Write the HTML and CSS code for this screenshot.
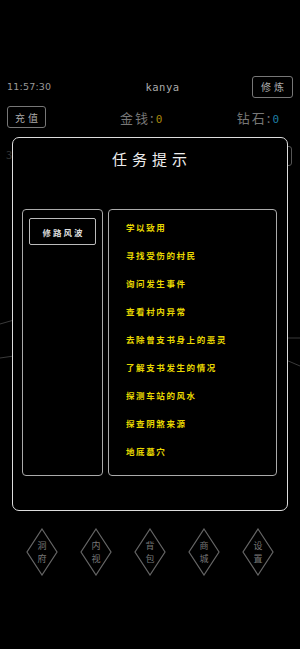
FILE: index.html
```html
<!DOCTYPE html>
<html lang="zh">
<head>
<meta charset="utf-8">
<link rel="stylesheet" href="styles.css">
</head>
<body>
<div class="page">
  <div class="header">
    <div class="row row1">
      <span class="time">11:57:30</span>
      <span class="name">kanya</span>
      <span class="btn">修炼</span>
    </div>
    <div class="row row2">
      <span class="btn">充值</span>
      <span class="stat">金钱:<b class="gold">0</b></span>
      <span class="stat">钻石:<b class="blue">0</b></span>
    </div>
  </div>
  <div class="stage">
    <svg class="bglines" width="300" height="390" viewBox="0 0 300 390">
      <path d="M0 196 L14 192" />
      <path d="M0 230 L14 228" />
      <path d="M286 210 L300 210" />
      <path d="M286 232 L300 238" />
    </svg>
    <span class="hidden-l">3</span>
    <span class="hidden-r"></span>
  </div>
  <nav class="nav">
    <div class="dia"><svg viewBox="0 0 32 48"><polygon points="16,1 31,24 16,47 1,24"/></svg><span class="lbl"><i>洞</i><i>府</i></span></div>
    <div class="dia"><svg viewBox="0 0 32 48"><polygon points="16,1 31,24 16,47 1,24"/></svg><span class="lbl"><i>内</i><i>视</i></span></div>
    <div class="dia"><svg viewBox="0 0 32 48"><polygon points="16,1 31,24 16,47 1,24"/></svg><span class="lbl"><i>背</i><i>包</i></span></div>
    <div class="dia"><svg viewBox="0 0 32 48"><polygon points="16,1 31,24 16,47 1,24"/></svg><span class="lbl"><i>商</i><i>城</i></span></div>
    <div class="dia"><svg viewBox="0 0 32 48"><polygon points="16,1 31,24 16,47 1,24"/></svg><span class="lbl"><i>设</i><i>置</i></span></div>
  </nav>
</div>

<div class="modal">
  <h1 class="title">任务提示</h1>
  <div class="panels">
    <div class="left">
      <div class="task-btn">修路风波</div>
    </div>
    <ul class="right">
      <li>学以致用</li>
      <li>寻找受伤的村民</li>
      <li>询问发生事件</li>
      <li>查看村内异常</li>
      <li>去除曾支书身上的恶灵</li>
      <li>了解支书发生的情况</li>
      <li>探测车站的风水</li>
      <li>探查阴煞来源</li>
      <li>地底墓穴</li>
    </ul>
  </div>
</div>
</body>
</html>
```

FILE: styles.css
```css
* { box-sizing: border-box; }
html, body {
  margin: 0;
  padding: 0;
  background: #000;
}
body {
  width: 300px;
  height: 649px;
  overflow: hidden;
  font-family: "Noto Sans CJK SC", "DejaVu Sans", sans-serif;
  color: #aaa;
}
.page {
  display: flex;
  flex-direction: column;
  height: 649px;
  padding-top: 75px;
}
.header {
  padding: 0 7px;
}
.row {
  display: flex;
  align-items: center;
  justify-content: space-between;
}
.row1 { height: 23px; }
.row2 { height: 22px; margin-top: 8px; }
.time {
  font-family: "DejaVu Sans", sans-serif;
  font-size: 9.5px;
  color: #999;
  width: 60px;
  letter-spacing: 0.2px;
}
.name {
  font-family: "DejaVu Sans Mono", monospace;
  font-size: 10.5px;
  color: #aaa;
  margin-left: 6px;
  letter-spacing: 0.5px;
}
.btn {
  display: flex;
  align-items: center;
  justify-content: center;
  border: 1px solid #777;
  border-radius: 3px;
  height: 22px;
  padding: 0;
  font-size: 10px;
  letter-spacing: 3px;
  color: #aaa;
  text-indent: 3px;
  width: 41px;
  white-space: nowrap;
}
.row2 .btn { width: 39px; height: 22px; }
.stat {
  font-size: 13px;
  color: #777;
  letter-spacing: 2px;
  white-space: nowrap;
}
.row2 .stat:nth-child(2) { margin-left: 74px; margin-right: auto; }
.row2 .stat:nth-child(3) { margin-right: 14px; }
.stat b { font-weight: normal; font-family: "DejaVu Sans Mono", monospace; font-size: 11px; letter-spacing: 0; }
.gold { color: #a8860b; }
.blue { color: #1f7ea6; }

.stage {
  position: relative;
  flex: 1;
}
.bglines {
  position: absolute;
  left: 0;
  top: 0;
}
.bglines path {
  stroke: #3a3a3a;
  stroke-width: 1;
  fill: none;
}
.hidden-l {
  position: absolute;
  left: 6px;
  top: 18px;
  font-size: 11px;
  color: #333;
}
.hidden-r {
  position: absolute;
  left: 270px;
  top: 18px;
  width: 22px;
  height: 20px;
  border: 1px solid #555;
  border-radius: 3px;
}

.nav {
  display: flex;
  justify-content: center;
  gap: 22px;
  height: 121px;
  padding-top: 0;
}
.dia {
  position: relative;
  width: 32px;
  height: 48px;
  display: flex;
  align-items: center;
  justify-content: center;
}
.dia svg {
  position: absolute;
  inset: 0;
  width: 32px;
  height: 48px;
}
.dia polygon {
  fill: none;
  stroke: #666;
  stroke-width: 1.2;
}
.lbl {
  position: relative;
  display: flex;
  flex-direction: column;
  align-items: center;
}
.lbl i {
  font-style: normal;
  display: block;
  font-size: 9px;
  line-height: 13px;
  height: 13px;
  color: #777;
}

.modal {
  position: absolute;
  left: 12px;
  top: 137px;
  width: 276px;
  height: 374px;
  border: 1.5px solid #ddd;
  border-radius: 7px;
  background: #000;
  padding: 0 10px 34px 9px;
  display: flex;
  flex-direction: column;
}
.title {
  margin: 0;
  height: 71px;
  padding-top: 10px;
  text-align: center;
  font-size: 15px;
  font-weight: normal;
  color: #eee;
  letter-spacing: 5px;
  text-indent: 5px;
}
.panels {
  flex: 1;
  display: flex;
  gap: 5px;
}
.left {
  width: 81px;
  border: 1.5px solid #aaa;
  border-radius: 4px;
  padding: 8px 6px 0 6px;
}
.task-btn {
  height: 27px;
  border: 1.5px solid #bbb;
  border-radius: 2px;
  display: flex;
  align-items: center;
  justify-content: center;
  font-size: 8.5px;
  font-weight: bold;
  color: #ddd;
  letter-spacing: 2px;
  text-indent: 2px;
}
.right {
  flex: 1;
  margin: 0;
  list-style: none;
  border: 1.5px solid #aaa;
  border-radius: 4px;
  padding: 3px 0 0 17px;
}
.right li {
  height: 28px;
  line-height: 28px;
  font-size: 8.5px;
  font-weight: bold;
  color: #e8d800;
  letter-spacing: 1.6px;
}
```
